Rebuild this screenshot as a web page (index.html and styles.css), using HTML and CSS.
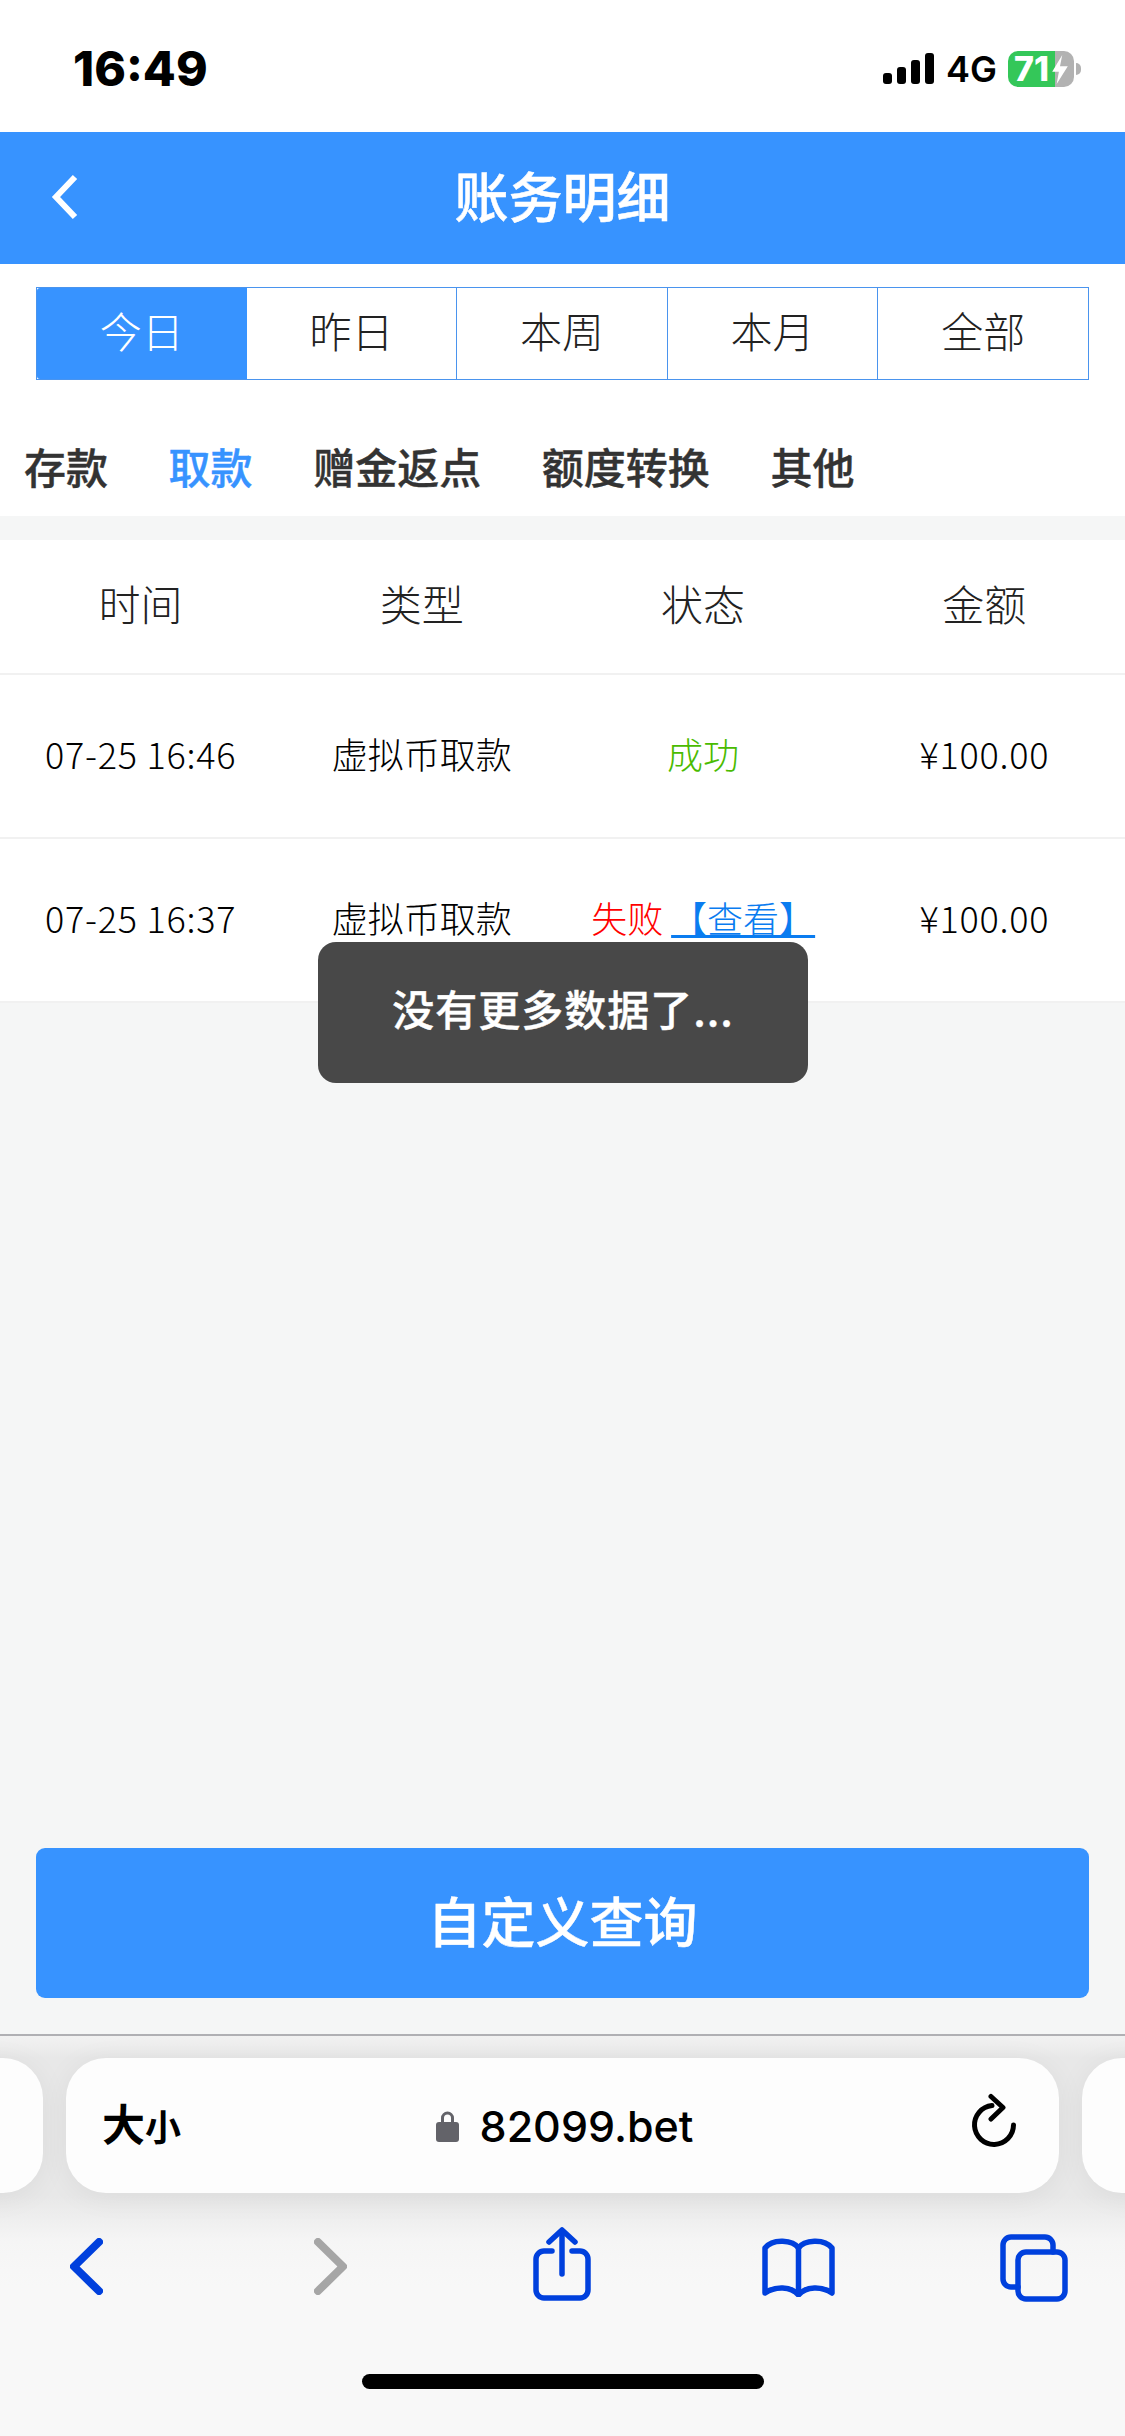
FILE: index.html
```html
<!DOCTYPE html>
<html lang="zh-CN">
<head>
    <meta charset="UTF-8">
    <meta name="viewport" content="width=device-width, initial-scale=1.0">
    <title>账务明细</title>
    <link rel="stylesheet" href="styles.css">
</head>
<body>
    <div class="page">
        <div class="status-bar">
            <span class="clock">16:49</span>
            <div class="status-right">
                <div class="signal"><i></i><i></i><i></i><i></i></div>
                <span class="network">4G</span>
                <div class="battery">
                    <span class="battery-level">71</span>
                    <svg class="battery-bolt" viewBox="0 0 16 26"><path d="M10 0 1 15h6l-2 11 10-16H8z"/></svg>
                    <span class="battery-cap"></span>
                </div>
            </div>
        </div>

        <header class="title-bar">
            <svg class="title-back" viewBox="0 0 30 46"><path d="M25 3 6 23l19 20"/></svg>
            <h1>账务明细</h1>
        </header>

        <div class="date-wrap">
            <div class="date-tabs">
                <div class="date-tab active">今日</div>
                <div class="date-tab">昨日</div>
                <div class="date-tab">本周</div>
                <div class="date-tab">本月</div>
                <div class="date-tab">全部</div>
            </div>
        </div>

        <nav class="type-tabs">
            <span>存款</span>
            <span class="active">取款</span>
            <span>赠金返点</span>
            <span>额度转换</span>
            <span>其他</span>
        </nav>

        <table class="records">
            <thead>
                <tr>
                    <th>时间</th>
                    <th>类型</th>
                    <th>状态</th>
                    <th>金额</th>
                </tr>
            </thead>
            <tbody>
                <tr>
                    <td class="num">07-25 16:46</td>
                    <td>虚拟币取款</td>
                    <td><span class="ok">成功</span></td>
                    <td class="num">¥100.00</td>
                </tr>
                <tr>
                    <td class="num">07-25 16:37</td>
                    <td>虚拟币取款</td>
                    <td><span class="fail">失败</span> <a class="view-link">【查看】</a></td>
                    <td class="num">¥100.00</td>
                </tr>
            </tbody>
        </table>

        <div class="query-wrap">
            <button type="button" class="query-btn">自定义查询</button>
        </div>

        <div class="browser-bar">
            <div class="url-row">
                <div class="url-card"></div>
                <div class="url-card main">
                    <span class="text-size">大<small>小</small></span>
                    <span class="address">
                        <svg class="lock" viewBox="0 0 23 33"><path d="M5 14V9a6.500 6.500 0 0 1 13 0v5h-3V9a3.500 3.500 0 0 0-7 0v5z"/><rect y="13" width="23" height="20" rx="3"/></svg>
                        82099.bet
                    </span>
                    <svg class="reload" viewBox="0 0 46 54"><path d="M21 11.500A19.500 19.500 0 1 0 42.500 31"/><path d="M20 2.500 32 13.500 20 25"/></svg>
                </div>
                <div class="url-card"></div>
            </div>
            <div class="toolbar">
                <svg class="tool tool-back" viewBox="0 0 33 57"><path d="M29 4 4 28.500 29 53"/></svg>
                <svg class="tool tool-forward" viewBox="0 0 33 57"><path d="M4 4 29 28.500 4 53"/></svg>
                <svg class="tool tool-share" viewBox="0 0 58 74"><path d="M19 24h-8a8 8 0 0 0-8 8v31a8 8 0 0 0 8 8h36a8 8 0 0 0 8-8V32a8 8 0 0 0-8-8h-8"/><path d="M29 47V4"/><path d="M16 15 29 3l13 12"/></svg>
                <svg class="tool tool-book" viewBox="0 0 73 60"><path d="M36.500 11C31 3 11 1 3 11v45c10-7 26-7 33.500 2C44 49 60 49 70 56V11c-8-10-28-8-33.500 0z"/><path d="M36.500 11v45"/></svg>
                <svg class="tool tool-tabs" viewBox="0 0 70 70"><path d="M19 54h-7a8 8 0 0 1-8-8V12a8 8 0 0 1 8-8h34a8 8 0 0 1 8 8v7"/><rect x="19" y="19" width="47" height="47" rx="8"/></svg>
            </div>
            <div class="home-bar"></div>
        </div>

        <div class="toast">没有更多数据了...</div>
    </div>
</body>
</html>
```

FILE: styles.css
```css
* {
    box-sizing: border-box;
}

body {
    margin: 0;
    font-family: "Noto Sans CJK SC", "Noto Sans", sans-serif;
    color: #333;
}

.page {
    position: relative;
    display: flex;
    flex-direction: column;
    width: 1125px;
    height: 2436px;
    overflow: hidden;
    background-color: #f5f6f6;
}

/* status bar */
.status-bar {
    display: flex;
    justify-content: space-between;
    align-items: center;
    height: 132px;
    padding: 5px 44px 0 73px;
    background: #fff;
    color: #000;
}

.clock {
    font-family: Inter, sans-serif;
    font-size: 48px;
    font-weight: 800;
}

.status-right {
    display: flex;
    align-items: center;
}

.signal {
    display: flex;
    align-items: flex-end;
    gap: 5px;
    height: 31px;
    margin-right: 12px;
}

.signal i {
    width: 9px;
    background: #000;
    border-radius: 3px;
}

.signal i:nth-child(1) { height: 11px; }
.signal i:nth-child(2) { height: 17px; }
.signal i:nth-child(3) { height: 24px; }
.signal i:nth-child(4) { height: 31px; }

.network {
    width: 62px;
    font-family: Inter, sans-serif;
    font-size: 36px;
    font-weight: 600;
}

.battery {
    position: relative;
    width: 66px;
    height: 36px;
    margin-right: 7px;
    border-radius: 10px;
    background: linear-gradient(to right, #34c759 47px, #b2b2b2 47px);
}

.battery-level {
    position: absolute;
    left: 6px;
    top: 0;
    font-family: Inter, sans-serif;
    font-size: 34px;
    line-height: 36px;
    font-weight: 800;
    color: #fff;
}

.battery-bolt {
    position: absolute;
    left: 43px;
    top: 4px;
    width: 18px;
    height: 29px;
    fill: #fff;
}

.battery-cap {
    position: absolute;
    left: 68px;
    top: 12px;
    width: 5px;
    height: 12px;
    border-radius: 0 5px 5px 0;
    background: #b2b2b2;
}

/* title */
.title-bar {
    position: relative;
    height: 132px;
    background: #3793ff;
}

.title-bar h1 {
    margin: 0;
    font-size: 54px;
    font-weight: 500;
    -webkit-text-stroke: 0.5px #fff;
    line-height: 126px;
    text-align: center;
    color: #fff;
}

.title-back {
    position: absolute;
    left: 50px;
    top: 42px;
    width: 30px;
    height: 46px;
    fill: none;
    stroke: #fff;
    stroke-width: 6;
}

/* date tabs */
.date-wrap {
    height: 116px;
    padding: 23px 36px 0;
    background: #fff;
}

.date-tabs {
    display: flex;
    height: 93px;
    border: 1px solid #4a94ee;
}

.date-tab {
    flex: 1;
    display: flex;
    align-items: center;
    justify-content: center;
    padding-bottom: 8px;
    border-right: 1px solid #4a94ee;
    font-size: 42px;
    font-weight: 300;
    color: #222;
}

.date-tab:last-child {
    border-right: 0;
}

.date-tab.active {
    border-right: 0;
    border-radius: 3px 0 0 3px;
    background: #3793ff;
    color: #fff;
}

.type-tabs {
    display: flex;
    align-items: center;
    gap: 60.6px;
    height: 136px;
    padding: 34px 0 0 24px;
    background: #fff;
    font-size: 42px;
    font-weight: 500;
    -webkit-text-stroke: 0.4px;
}

.type-tabs .active {
    color: #3793ff;
}

/* records */
.records {
    width: 100%;
    margin-top: 24px;
    background: #fff;
    border-collapse: collapse;
    table-layout: fixed;
}

.records th,
.records td {
    text-align: center;
    white-space: nowrap;
    border-bottom: 2px solid #f1f1f1;
}

.records th {
    height: 134px;
    padding: 0 0 8px;
    font-size: 42px;
    font-weight: 300;
    color: #222;
}

.records td {
    height: 164px;
    padding: 0 0 6px;
    font-size: 36px;
    font-weight: 300;
    color: #000;
}

.records td.num {
    letter-spacing: 0.75px;
}

.ok {
    color: #4abb00;
}

.fail {
    color: #ff0000;
}

.view-link {
    color: #0a7cf0;
    text-decoration: underline;
}

.toast {
    position: absolute;
    left: 318px;
    top: 942px;
    width: 490px;
    height: 141px;
    border-radius: 18px;
    background: #484848;
    color: #fff;
    font-size: 42px;
    font-weight: 500;
    -webkit-text-stroke: 0.4px #fff;
    line-height: 132px;
    text-align: center;
    letter-spacing: 1px;
}

/* query button */
.query-wrap {
    margin-top: auto;
    height: 186px;
    padding: 0 36px;
}

.query-btn {
    display: block;
    width: 100%;
    height: 150px;
    padding: 0 0 8px;
    border: 0;
    border-radius: 9px;
    background: #3793ff;
    color: #fff;
    font-family: inherit;
    font-size: 54px;
    font-weight: 500;
    -webkit-text-stroke: 0.4px #fff;
}

/* safari bar */
.browser-bar {
    height: 402px;
    border-top: 2px solid #b0b0b4;
    background: linear-gradient(to bottom, #f2f2f2 0, #e8e8e8 22px, #e8e8e8 160px, #f5f5f5 205px, #f8f8f8 250px);
}

.url-row {
    display: flex;
    justify-content: center;
    gap: 23px;
    margin-top: 22px;
}

.url-card {
    flex: none;
    display: flex;
    align-items: center;
    width: 993px;
    height: 135px;
    border-radius: 40px;
    background: #fdfdfd;
    box-shadow: 0 4px 30px rgba(0, 0, 0, 0.06);
}

.url-card.main {
    position: relative;
    justify-content: center;
    padding-left: 4px;
}

.text-size {
    position: absolute;
    left: 36px;
    top: 33px;
    font-size: 43px;
    font-weight: 700;
    color: #000;
}

.text-size small {
    font-size: 36px;
}

.address {
    display: flex;
    align-items: center;
    gap: 21px;
    font-family: Inter, sans-serif;
    font-size: 43px;
    font-weight: 500;
    color: #000;
}

.lock {
    width: 23px;
    height: 33px;
    fill: #636369;
}

.reload {
    position: absolute;
    right: 42px;
    top: 35px;
    width: 46px;
    height: 56px;
    fill: none;
    stroke: #000;
    stroke-width: 5;
    stroke-linecap: round;
    stroke-linejoin: round;
}

.toolbar {
    position: relative;
    height: 181px;
}

.tool {
    position: absolute;
    fill: none;
    stroke: #0040dd;
    stroke-width: 5.5;
    stroke-linecap: round;
    stroke-linejoin: round;
}

.tool-back {
    left: 70px;
    top: 45px;
    width: 33px;
    height: 57px;
    stroke-width: 8;
}

.tool-forward {
    left: 314px;
    top: 45px;
    width: 33px;
    height: 57px;
    stroke: #a6a6a6;
    stroke-width: 8;
}

.tool-share {
    left: 533px;
    top: 34px;
    width: 58px;
    height: 74px;
}

.tool-book {
    left: 762px;
    top: 44px;
    width: 73px;
    height: 60px;
}

.tool-tabs {
    left: 999px;
    top: 40px;
    width: 70px;
    height: 70px;
}

.home-bar {
    width: 402px;
    height: 15px;
    margin: 0 auto;
    border-radius: 8px;
    background: #000;
}
```
